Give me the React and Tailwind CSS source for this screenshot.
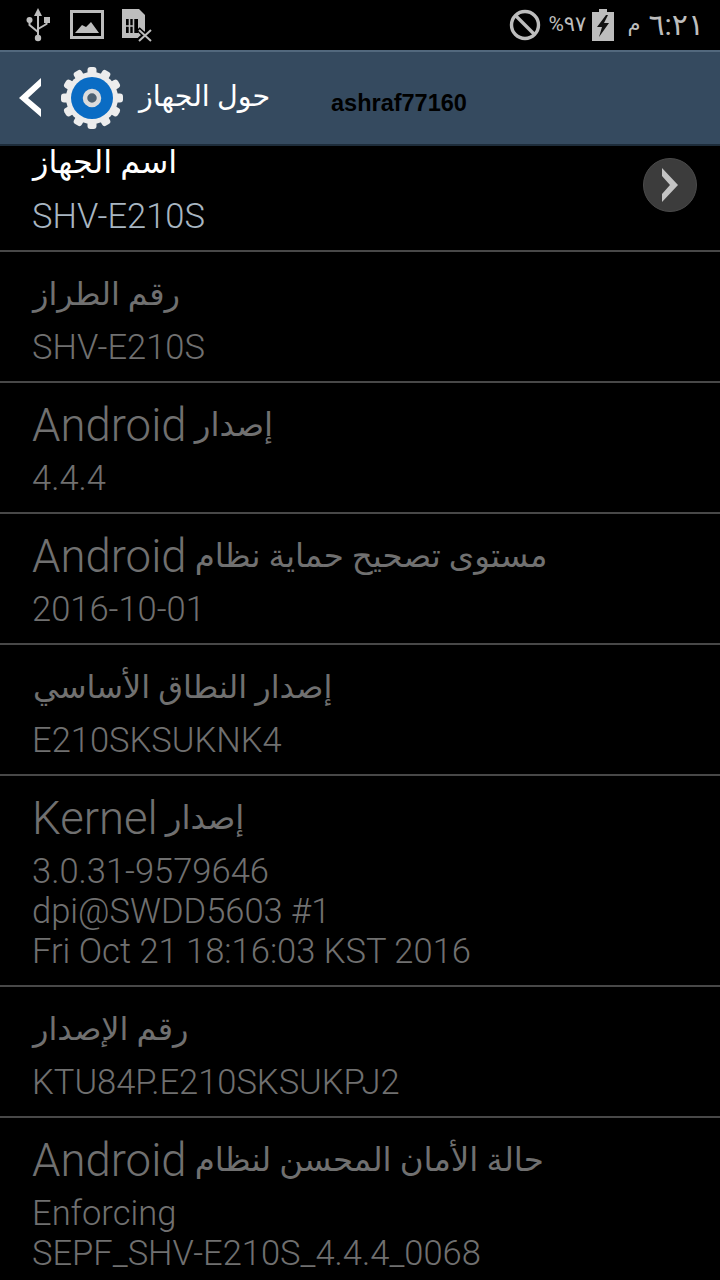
import React from "react";

const rows = [
  { title: "رقم الطراز", lines: ["SHV-E210S"] },
  { title: "إصدار Android", lines: ["4.4.4"], big: true },
  { title: "مستوى تصحيح حماية نظام Android", lines: ["2016-10-01"], big: true },
  { title: "إصدار النطاق الأساسي", lines: ["E210SKSUKNK4"] },
  {
    title: "إصدار Kernel",
    lines: ["3.0.31-9579646", "dpi@SWDD5603 #1", "Fri Oct 21 18:16:03 KST 2016"],
    big: true,
  },
  { title: "رقم الإصدار", lines: ["KTU84P.E210SKSUKPJ2"] },
  {
    title: "حالة الأمان المحسن لنظام Android",
    lines: ["Enforcing", "SEPF_SHV-E210S_4.4.4_0068", "Fri Oct 21 18:16:56 2016"],
    big: true,
  },
];

function Usb() {
  return (
    <svg width="24" height="36" viewBox="0 0 24 36" fill="none">
      <path d="M12 1 L8 9 H16 Z" fill="#bdbdbd" />
      <path d="M12 8 V30 M3.5 15 V18 L12 25 M20.5 15 V17 L12 22" stroke="#bdbdbd" strokeWidth="2" />
      <circle cx="3.5" cy="13" r="3" fill="#bdbdbd" />
      <rect x="18" y="10" width="6" height="6" fill="#bdbdbd" />
      <circle cx="12" cy="31" r="3.2" fill="#bdbdbd" />
    </svg>
  );
}

function Picture() {
  return (
    <svg width="34" height="30" viewBox="0 0 34 30">
      <rect x="1.5" y="1.5" width="31" height="26" fill="none" stroke="#bdbdbd" strokeWidth="3" />
      <path d="M5 23 L12 15 L16 17 L21 12 L29 23 Z" fill="#bdbdbd" />
    </svg>
  );
}

function SimOff() {
  return (
    <svg width="32" height="34" viewBox="0 0 32 34">
      <path d="M1 1 H18 L24 7 V30 H1 Z" fill="#bdbdbd" />
      <path d="M5 11 H17 V25 H5 Z" fill="#000" />
      <path d="M8.5 11 V25 M12.5 11 V25 M5 18 H12" stroke="#bdbdbd" strokeWidth="1.6" />
      <path d="M17 21 L30 33 M30 21 L17 33" stroke="#000" strokeWidth="5" />
      <path d="M18 22 L30 33 M30 22 L18 33" stroke="#bdbdbd" strokeWidth="2" />
    </svg>
  );
}

function Blocked() {
  return (
    <svg width="32" height="32" viewBox="0 0 32 32" fill="none">
      <circle cx="16" cy="16" r="13.5" stroke="#bdbdbd" strokeWidth="3.4" />
      <path d="M6.5 6.5 L25.5 25.5" stroke="#bdbdbd" strokeWidth="3.4" />
    </svg>
  );
}

function Battery() {
  return (
    <svg width="22" height="32" viewBox="0 0 22 32">
      <path d="M7 0 H15 V3 H22 V32 H0 V3 H7 Z" fill="#bdbdbd" />
      <path d="M14 6 L5 18 H10 L7 28 L17 14 H12 L16 6 Z" fill="#111" />
    </svg>
  );
}

function Gear() {
  const teeth = Array.from({ length: 12 }, (_, i) => i * 30);
  return (
    <svg width="64" height="64" viewBox="0 0 64 64">
      {teeth.map((a) => (
        <rect key={a} x="27.5" y="1" width="9" height="12" rx="3" fill="#ededed" transform={`rotate(${a} 32 32)`} />
      ))}
      <circle cx="32" cy="32" r="26" fill="#ececec" />
      <circle cx="32" cy="32" r="21" fill="#0a6cc4" />
      <circle cx="32" cy="32" r="7" fill="#4d6070" stroke="#dcdcdc" strokeWidth="4.5" />
    </svg>
  );
}

function Row({ title, lines, big }) {
  return (
    <div className="border-b-2 border-[#484848] px-[32px] pt-[19px] pb-[14px] text-[#707070]">
      <div dir="rtl" className={`h-[47px] text-left leading-[47px] ${big ? "text-[45.5px] font-light" : "ml-[1px] text-[32px]"}`}>
        {big ? <BigTitle title={title} /> : title}
      </div>
      <div className="mt-[9px] text-[34.5px] leading-[40px] font-light">
        {lines.map((l) => (
          <div key={l}>{l}</div>
        ))}
      </div>
    </div>
  );
}

// arabic part is smaller than the latin word next to it
function BigTitle({ title }) {
  const word = title.split(" ").pop();
  return (
    <>
      <span className="align-[5px] text-[32.5px] font-normal">{title.slice(0, -word.length)}</span>
      {word}
    </>
  );
}

export default function App() {
  return (
    <div className="h-[1280px] overflow-hidden bg-black font-['Roboto','DejaVu_Sans',sans-serif]">
      <div className="flex h-[50px] items-center justify-between pl-[26px] pr-[16px]">
        <div className="flex items-center gap-[20px]">
          <Usb />
          <Picture />
          <span className="-ml-[3px]"><SimOff /></span>
        </div>
        <div dir="ltr" className="flex items-center text-[#bdbdbd]">
          <Blocked />
          <span className="ml-[7px] text-[21px]">%٩٧</span>
          <span className="ml-[6px]"><Battery /></span>
          <span className="ml-[13px] text-[21px]">م</span>
          <span className="-mt-[2px] ml-[8px] text-[30px]">٦:٢١</span>
        </div>
      </div>
      <div className="flex h-[96px] items-center border-t-2 border-b-2 border-t-[#52687d] border-b-[#1d2c3a] bg-[#354a5f] pl-[18px]">
        <svg width="24" height="40" viewBox="0 0 24 40">
          <path d="M23 0 L1 20 L23 39 V31 L10 20 L23 8 Z" fill="#fff" />
        </svg>
        <span className="ml-[18px]"><Gear /></span>
        <span className="-mt-[4px] ml-[15px] w-[132px] text-[28.6px] text-white">حول الجهاز</span>
        <span className="mt-[12px] ml-[60px] font-['Liberation_Sans',sans-serif] text-[23.5px] font-bold text-black">ashraf77160</span>
      </div>
      <div className="flex h-[106px] items-center justify-between border-b-2 border-[#484848] pl-[32px] pr-[23px]">
        <div className="-mt-[17px]">
          <div dir="rtl" className="ml-[1px] text-left text-[32px] leading-[40px] text-white">اسم الجهاز</div>
          <div className="mt-[14px] text-[34.5px] leading-[41px] font-light text-[#a8b6c2]">SHV-E210S</div>
        </div>
        <div className="-mt-[27px] flex h-[54px] w-[54px] items-center justify-center rounded-full border border-[#4a4a4a] bg-[#3c3c3c]">
          <svg width="18" height="34" viewBox="0 0 18 34">
            <path d="M1 0 L17 17 L1 34 V26 L9 17 L1 8 Z" fill="#c4c4c4" />
          </svg>
        </div>
      </div>
      {rows.map((r) => (
        <Row key={r.title} {...r} />
      ))}
    </div>
  );
}
